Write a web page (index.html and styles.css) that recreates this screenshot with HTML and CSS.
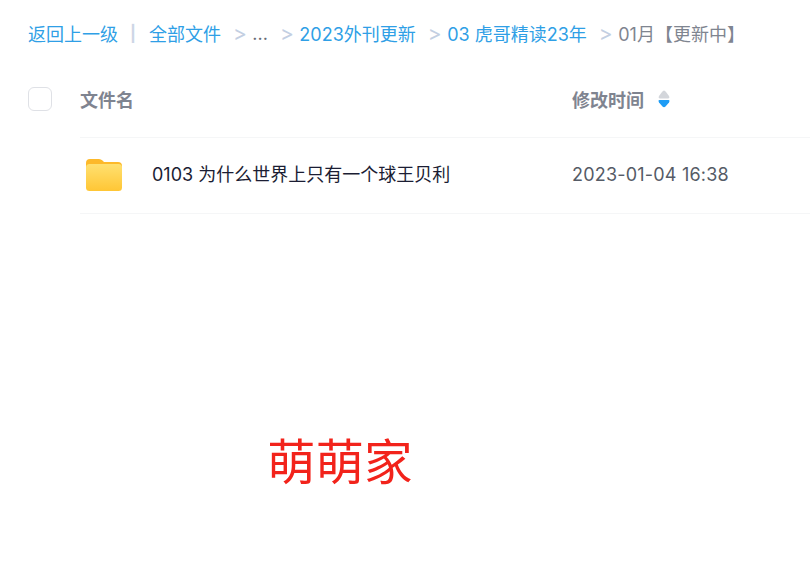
FILE: index.html
```html
<!DOCTYPE html>
<html lang="zh-CN">
<head>
  <meta charset="UTF-8" />
  <title>全部文件</title>
  <link rel="stylesheet" href="styles.css">
</head>
<body>
  <div class="crumbs">
    <a class="back">返回上一级</a>
    <span class="bar">|</span>
    <a class="all">全部文件</a>
    <span class="arrow">&gt;</span>
    <span class="dots">...</span>
    <span class="arrow">&gt;</span>
    <a>2023外刊更新</a>
    <span class="arrow">&gt;</span>
    <a>03 虎哥精读23年</a>
    <span class="arrow">&gt;</span>
    <span class="current">01月【更新中】</span>
  </div>

  <div class="list-head">
    <span class="check"></span>
    <div class="head-row">
      <span class="col-name">文件名</span>
      <span class="col-time">修改时间
        <svg class="sort" width="12" height="18" viewBox="0 0 12 18">
          <path d="M6 0.5 Q7 0.5 8 2 L11 6 Q12 8.5 10 8.5 L2 8.5 Q0 8.5 1 6 L4 2 Q5 0.5 6 0.5 Z" fill="#d3d6db"/>
          <path d="M1.5 10 L10.5 10 Q12.2 10 11 12.5 L7.5 16.5 Q6 18 4.5 16.5 L1 12.5 Q-0.2 10 1.5 10 Z" fill="#1e9cf5"/>
        </svg>
      </span>
    </div>
  </div>

  <div class="file-row">
    <svg class="folder" width="38" height="34" viewBox="0 0 38 34">
      <defs>
        <linearGradient id="front" x1="0" y1="0" x2="0" y2="1">
          <stop offset="0" stop-color="#ffe070"/>
          <stop offset="1" stop-color="#ffc635"/>
        </linearGradient>
      </defs>
      <path d="M1 5 Q1 1 5 1 L14 1 Q16 1 17.5 2.5 L19 4 L33 4 Q37 4 37 8 L37 14 L1 14 Z" fill="#fdb92a"/>
      <rect x="1" y="6" width="36" height="27" rx="3.5" fill="url(#front)"/>
    </svg>
    <span class="file-name">0103 为什么世界上只有一个球王贝利</span>
    <span class="file-time">2023-01-04 16:38</span>
  </div>

  <div class="mark">萌萌家</div>
</body>
</html>
```

FILE: styles.css
```css
body {
  font-family: Inter, "Noto Sans CJK SC", sans-serif;
  background: white;
  margin: 0;
  height: 566px;
  overflow: hidden;
}

.crumbs {
  display: flex;
  align-items: center;
  height: 24px;
  padding: 21px 0 0 28px;
  font-size: 18px;
  color: #2f9fe6;
  white-space: nowrap;
}

.bar {
  margin: 0 13px 0 12px;
  font-size: 16px;
  font-weight: bold;
  color: #cdd6e6;
}

.arrow {
  margin: 0 5.5px 0 12px;
  font-size: 21px;
  color: #c3cfe2;
}

.dots {
  color: #666b75;
}

.current {
  color: #7f8590;
}

.list-head {
  display: flex;
  align-items: center;
  height: 92px;
  padding-left: 28px;
}

.check {
  width: 22px;
  height: 22px;
  margin-top: 16px;
  border: 1px solid #dfe1e6;
  border-radius: 6px;
}

.head-row {
  display: flex;
  align-items: center;
  flex: 1;
  height: 76px;
  padding-top: 16px;
  margin-left: 28px;
  border-bottom: 1px solid #f5f6f7;
  font-size: 18px;
  font-weight: bold;
  color: #7f8490;
}

.col-name {
  width: 492px;
}

.col-time {
  display: flex;
  align-items: center;
}

.sort {
  margin-left: 14px;
}

.file-row {
  display: flex;
  align-items: center;
  height: 76px;
  margin-left: 80px;
  border-bottom: 1px solid #f5f6f7;
  font-size: 18px;
}

.folder {
  margin-left: 5px;
}

.file-name {
  width: 420px;
  margin-left: 29px;
  padding-bottom: 5px;
  color: #1b1d33;
}

.file-time {
  padding-bottom: 2px;
  letter-spacing: 0.2px;
  color: #555b66;
}

.mark {
  margin: 215px 0 0 267px;
  font-family: "Noto Sans CJK SC", sans-serif;
  font-size: 48.5px;
  line-height: 60px;
  color: #f2231b;
}
```
